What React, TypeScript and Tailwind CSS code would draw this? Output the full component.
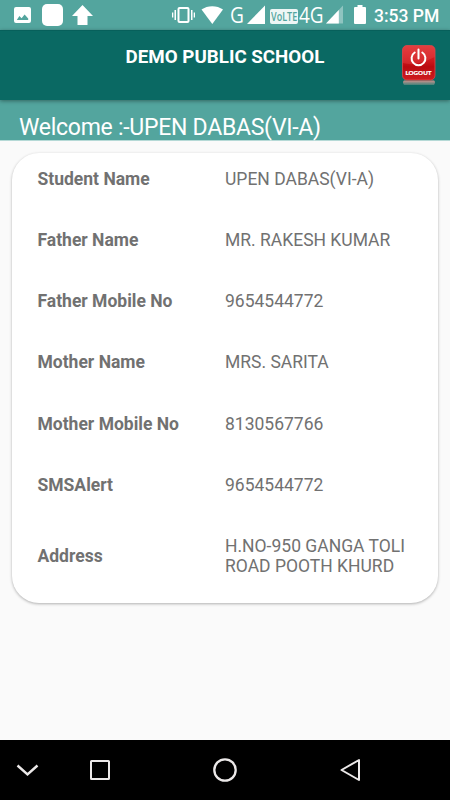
import React from "react";

const rows: [string, string][] = [
  ["Student Name", "UPEN DABAS(VI-A)"],
  ["Father Name", "MR. RAKESH KUMAR"],
  ["Father Mobile No", "9654544772"],
  ["Mother Name", "MRS. SARITA"],
  ["Mother Mobile No", "8130567766"],
  ["SMSAlert", "9654544772"],
];

function StatusBar() {
  return (
    <div className="flex h-[30px] shrink-0 items-center bg-[#53a59e] text-white">
      <svg className="h-[30px] w-[100px] shrink-0" viewBox="0 0 100 30" fill="white">
        <path
          fillRule="evenodd"
          d="M16 7H29Q31 7 31 9V21Q31 23 29 23H16Q14 23 14 21V9Q14 7 16 7ZM16.8 20H28.2V18.6L24.6 14.6L21.6 18.2L19.4 16Z"
        />
        <rect x="42" y="4" width="21" height="22" rx="5" />
        <path d="M82.500 5L93 16H87.500V25H77.500V16H72Z" />
      </svg>
      <svg className="ml-[70px] h-[30px] w-[58px] shrink-0" viewBox="170 0 58 30" fill="white">
        <rect x="178.500" y="8" width="10" height="14" rx="1" fill="none" stroke="white" strokeWidth="2" />
        <path d="M174.500 10H176V20H174.500ZM172 12.500H173.300V17.500H172ZM191 10H192.500V20H191ZM193.700 12.500H195V17.500H193.700Z" />
        <path d="M201.500 9.500C207.500 5 217 5 223 9.500L212.300 24Z" />
      </svg>
      <span className="w-[18px] pl-[2px] font-['Open_Sans','Noto_Sans',sans-serif] text-[22.500px] leading-[30px]">
        <span className="inline-block origin-left scale-x-[0.85]">G</span>
      </span>
      <svg className="h-[30px] w-[21px] shrink-0" viewBox="246 0 21 30" fill="white">
        <path d="M265 5.500V24H247Z" />
      </svg>
      <span className="ml-[3px] mt-[3px] flex h-[15px] w-[28px] shrink-0 items-center justify-center rounded-[2px] bg-white/90 font-['Open_Sans',sans-serif] text-[12.500px] leading-[15px] font-semibold text-[#53a59e]">
        <span className="scale-x-[0.72]">VoLTE</span>
      </span>
      <span className="ml-px w-[26px] font-['Open_Sans','Noto_Sans',sans-serif] text-[22.500px] leading-[30px]">
        <span className="inline-block origin-left scale-x-[0.84]">4G</span>
      </span>
      <svg className="h-[30px] w-[49px] shrink-0" viewBox="325 0 49 30" fill="white">
        <path opacity=".35" d="M343 5.500V23.500H326Z" />
        <path d="M338.800 10V23.500H326Z" />
        <path d="M357.500 5H362.500V7H365Q366 7 366 8V23Q366 24 365 24H355Q354 24 354 23V8Q354 7 355 7H357.500Z" />
      </svg>
      <span className="mt-[2px] whitespace-nowrap text-[17.500px] leading-[30px] font-medium">3:53 PM</span>
    </div>
  );
}

function LogoutIcon() {
  return (
    <svg className="h-[42px] w-[36px]" viewBox="401 44 36 42">
      <defs>
        <linearGradient id="red" x1="0" y1="0" x2="0" y2="1">
          <stop offset="0" stopColor="#dc3032" />
          <stop offset=".45" stopColor="#cc171c" />
          <stop offset=".62" stopColor="#b90a10" />
          <stop offset="1" stopColor="#cf1c20" />
        </linearGradient>
        <linearGradient id="reflection" x1="0" y1="0" x2="0" y2="1">
          <stop offset="0" stopColor="#d28d89" />
          <stop offset="1" stopColor="#b2aaa0" stopOpacity=".35" />
        </linearGradient>
      </defs>
      <path d="M404 80.500H434Q436 82 434 85H404Q402 82 404 80.500Z" fill="url(#reflection)" />
      <rect x="402.500" y="45.500" width="32.500" height="34.500" rx="4.500" fill="url(#red)" stroke="#e0484a" strokeWidth=".8" />
      <path d="M403 63Q416 67 434.600 57V50Q434.600 46 431 46H407Q403 46 403 50Z" fill="#ff7777" opacity=".2" />
      <path d="M414.700 52.500A6.900 6.900 0 1 0 422.300 52.500M418.500 49.500V58.500" fill="none" stroke="white" strokeWidth="2" strokeLinecap="round" />
      <text x="418.500" y="74.500" textAnchor="middle" fill="white" stroke="white" strokeWidth=".2" fontSize="6" fontWeight="900" fontFamily="Lato, sans-serif" textLength="26" lengthAdjust="spacingAndGlyphs">
        LOGOUT
      </text>
    </svg>
  );
}

export default function App() {
  return (
    <div className="flex h-[800px] w-[450px] flex-col overflow-hidden bg-[#fafafa] font-[Roboto,sans-serif]">
      <StatusBar />
      <header className="z-10 flex h-[70px] shrink-0 items-start border-t border-[#07605b] bg-[#0a6963] shadow-[0_1px_4px_rgba(0,0,0,0.4)]">
        <h1 className="ml-[50px] mt-[13px] w-[350px] text-center text-[18.750px] leading-[26px] font-bold text-white">
          DEMO PUBLIC SCHOOL
        </h1>
        <div className="ml-px mt-[13px]">
          <LogoutIcon />
        </div>
      </header>
      <div className="h-[41px] shrink-0 border-b border-[#b5d9d6] bg-[#53a59e] pl-[19px] pt-[13px] text-[23px] leading-[30px] tracking-[-0.270px] whitespace-nowrap text-white">
        Welcome :-UPEN DABAS(VI-A)
      </div>
      <main className="mx-[12px] mt-[12px] flex h-[450px] shrink-0 flex-col rounded-[27px] bg-white pl-[25.500px] text-[17.500px] leading-[20.500px] text-[#717171] shadow-[0_1px_3px_rgba(0,0,0,0.3)]">
        {rows.map(([label, value]) => (
          <div key={label} className="flex h-[61.250px] shrink-0 pt-[15.600px]">
            <span className="w-[187.500px] font-bold">{label}</span>
            <span>{value}</span>
          </div>
        ))}
        <div className="flex items-center pt-[15.200px]">
          <span className="w-[187.500px] font-bold">Address</span>
          <span className="w-[190px]">
            H.NO-950 GANGA TOLI
            <br />
            ROAD POOTH KHURD
          </span>
        </div>
      </main>
      <nav className="mt-auto h-[60px] shrink-0 bg-black">
        <svg className="h-[60px] w-[450px]" viewBox="0 740 450 60" fill="none" stroke="#ece9e9" strokeWidth="2">
          <path d="M17.500 765.500L27.500 774.500L37.500 765.500" strokeWidth="2.400" />
          <rect x="91" y="761" width="18" height="18" rx=".5" />
          <circle cx="225" cy="770" r="10.700" strokeWidth="2.300" />
          <path d="M359 760V780L341.500 770Z" strokeLinejoin="round" />
        </svg>
      </nav>
    </div>
  );
}
